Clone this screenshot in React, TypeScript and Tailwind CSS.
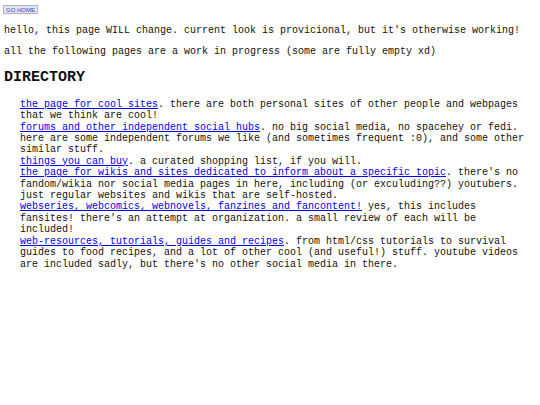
import React from 'react';

const links = [
  {
    label: 'the page for cool sites',
    rest: '. there are both personal sites of other people and webpages that we think are cool!',
  },
  {
    label: 'forums and other independent social hubs',
    rest: '. no big social media, no spacehey or fedi. here are some independent forums we like (and sometimes frequent :0), and some other similar stuff.',
  },
  {
    label: 'things you can buy',
    rest: '. a curated shopping list, if you will.',
  },
  {
    label: 'the page for wikis and sites dedicated to inform about a specific topic',
    rest: ". there's no fandom/wikia nor social media pages in here, including (or exculuding??) youtubers. just regular websites and wikis that are self-hosted.",
  },
  {
    label: 'webseries, webcomics, webnovels, fanzines and fancontent!',
    rest: " yes, this includes fansites! there's an attempt at organization. a small review of each will be included!",
  },
  {
    label: 'web-resources, tutorials, guides and recipes',
    rest: ". from html/css tutorials to survival guides to food recipes, and a lot of other cool (and useful!) stuff. youtube videos are included sadly, but there's no other social media in there.",
  },
];

export default function App() {
  return (
    <div className="min-h-screen bg-white p-[4px] font-['Liberation_Mono',monospace] text-[10px] leading-[11.4px] text-[#111]">
      <div className="flex h-[11px] items-center">
        <span className="ml-[-1px] flex h-[9px] items-center border border-[#b0b0c8] bg-[#e4e4f2] px-[2px] font-['Liberation_Sans',sans-serif] text-[6px] leading-none text-[#3346c0]">
          GO HOME
        </span>
      </div>
      <p className="mt-[10px]">
        hello, this page WILL change. current look is provicional, but it's otherwise working!
      </p>
      <p className="mt-[9.5px]">
        all the following pages are a work in progress (some are fully empty xd)
      </p>
      <h2 className="mt-[12px] text-[15px] font-bold leading-[17px]">DIRECTORY</h2>
      <ul className="mt-[12.5px] pl-[16px]">
        {links.map((l) => (
          <li key={l.label}>
            <a href="#" className="text-[#0000ee] underline">
              {l.label}
            </a>
            {l.rest}
          </li>
        ))}
      </ul>
    </div>
  );
}
